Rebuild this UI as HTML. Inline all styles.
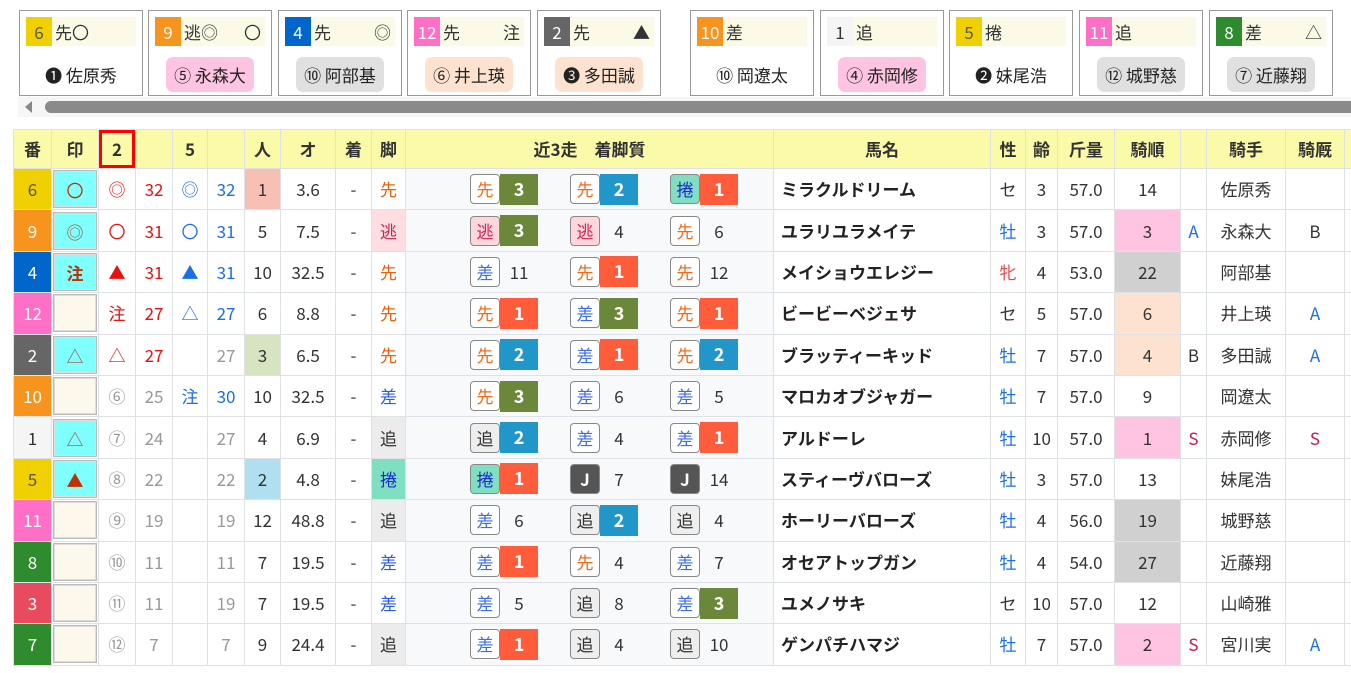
<!DOCTYPE html>
<html><head><meta charset="utf-8">
<style>
*{box-sizing:border-box;margin:0;padding:0}
body{width:1351px;height:673px;overflow:hidden;background:#fff;font-family:"Noto Sans CJK JP","Liberation Sans",sans-serif;color:#333;position:relative}
.card{position:absolute;top:10px;width:124px;height:86px;border:1px solid #999;background:#fff}
.card .top{position:absolute;left:6px;top:6px;right:6px;height:29px;background:#fafae6;font-size:17px;line-height:29px}
.card .top .nb{display:inline-block;width:26px;height:29px;text-align:center;vertical-align:top;margin-right:3px}
.card .top .mk{position:absolute;right:4px;top:0}
.card .nm{position:absolute;left:0;right:0;top:46px;text-align:center}
.card .nm span{display:inline-block;height:35px;line-height:35px;padding:0 8px;border-radius:7px;font-size:17px;color:#222}
.sb{position:absolute;left:18px;top:97px;width:1333px;height:20px;background:#f6f6f6}
.sb .ar{position:absolute;left:7px;top:4px;width:0;height:0;border-top:6px solid transparent;border-bottom:6px solid transparent;border-right:7px solid #888}
.sb .th{position:absolute;left:27px;top:4px;right:0;height:12px;background:#8a8a8a;border-radius:6px 0 0 6px}
table{position:absolute;left:13px;top:129px;border-collapse:collapse;table-layout:fixed;width:1360px}
td,th{border:1px solid #dee2e6;text-align:center;font-size:17px;line-height:24px;height:41.4px;padding:0;white-space:nowrap;overflow:hidden}
th{background:#fafaa8;font-weight:bold;height:39px;color:#333}
.n{color:#fff}
.m{padding:1px}
.m div{height:38px;line-height:38px;border:1px solid #bbb;box-shadow:inset 0 0 0 1px #ddd}
.cy{background:#80ffff;color:#c03000}
.cr{background:#fdf8ec}
.rd{color:#e81010}.bu{color:#1a6fe6}.gy{color:#999}
.rc{background:#f8f9fa;text-align:left;padding-left:64px}
.g3{display:inline-flex;width:100px;vertical-align:middle;align-items:center}
.b{display:inline-block;width:30px;height:30px;line-height:28px;border:1px solid #888;border-radius:4px;text-align:center;font-size:17px}
.r{display:inline-block;width:38px;height:31px;line-height:31px;text-align:center;color:#fff;font-weight:bold;font-size:18px}
.t{display:inline-block;width:38px;text-align:center;font-size:17px}
.gr{background:#6b873a}.bl{background:#2196c9}.re{background:#ff5c3c}
.s{background:#fff;color:#f06a1a}.e{background:#ffd6dc;color:#c8264f}.d{background:#fff;color:#3d6de0}.o{background:#eee;color:#333}.k{background:#7fdfc0;color:#1a2ad0}.j{background:#555;color:#fff;font-weight:bold}
.hn{text-align:left;padding-left:7px;font-weight:bold;color:#222}
.ks{color:#e8600c}.ke{background:#ffdde0;color:#c8264f}.kd{color:#2a5ce0}.ko{background:#ececec;color:#333}.kk{background:#7fdfc0;color:#1a2ad0}
.pk{background:#ffc4e1}.gyb{background:#d0d0d0}.pe{background:#fde2cf}
.sx{color:#1a6fe6}.sf{color:#e84a4a}
.A{color:#1a6fe6}.S{color:#d0184e}
</style></head><body>

<div class="card" style="left:19px"><div class="top"><span class="nb" style="background:#f0d000;color:#555">6</span>先〇</div><div class="nm"><span>❶ 佐原秀</span></div></div>
<div class="card" style="left:148px"><div class="top"><span class="nb" style="background:#f7941d;color:#fff">9</span>逃◎<span class="mk">〇</span></div><div class="nm"><span style="background:#ffc4e1">⑤ 永森大</span></div></div>
<div class="card" style="left:278px"><div class="top"><span class="nb" style="background:#0066cc;color:#fff">4</span>先<span class="mk">◎</span></div><div class="nm"><span style="background:#e0e0e0">⑩ 阿部基</span></div></div>
<div class="card" style="left:407px"><div class="top"><span class="nb" style="background:#ff6ec7;color:#fff">12</span>先<span class="mk">注</span></div><div class="nm"><span style="background:#fde2cf">⑥ 井上瑛</span></div></div>
<div class="card" style="left:537px"><div class="top"><span class="nb" style="background:#666;color:#fff">2</span>先<span class="mk">▲</span></div><div class="nm"><span style="background:#fde2cf">❸ 多田誠</span></div></div>
<div class="card" style="left:690px"><div class="top"><span class="nb" style="background:#f7941d;color:#fff">10</span>差</div><div class="nm"><span>⑩ 岡遼太</span></div></div>
<div class="card" style="left:820px"><div class="top"><span class="nb" style="background:#f5f5f5;color:#333">1</span>追</div><div class="nm"><span style="background:#ffc4e1">④ 赤岡修</span></div></div>
<div class="card" style="left:949px"><div class="top"><span class="nb" style="background:#f0d000;color:#555">5</span>捲</div><div class="nm"><span>❷ 妹尾浩</span></div></div>
<div class="card" style="left:1079px"><div class="top"><span class="nb" style="background:#ff6ec7;color:#fff">11</span>追</div><div class="nm"><span style="background:#e0e0e0">⑫ 城野慈</span></div></div>
<div class="card" style="left:1209px"><div class="top"><span class="nb" style="background:#2e8b2e;color:#fff">8</span>差<span class="mk">△</span></div><div class="nm"><span style="background:#e0e0e0">⑦ 近藤翔</span></div></div>

<div class="sb"><div class="ar"></div><div class="th"></div></div>

<table>
<colgroup><col style="width:38px"><col style="width:47px"><col style="width:37px"><col style="width:37px"><col style="width:35px"><col style="width:37px"><col style="width:36px"><col style="width:55px"><col style="width:36px"><col style="width:34px"><col style="width:368px"><col style="width:217px"><col style="width:35px"><col style="width:32px"><col style="width:57px"><col style="width:66px"><col style="width:26px"><col style="width:79px"><col style="width:59px"><col style="width:29px"></colgroup>
<tr><th>番</th><th>印</th><th style="box-shadow:inset 0 0 0 3px #f00">2</th><th></th><th>5</th><th></th><th>人</th><th>オ</th><th>着</th><th>脚</th><th>近3走　着脚質</th><th>馬名</th><th>性</th><th>齢</th><th>斤量</th><th>騎順</th><th></th><th>騎手</th><th>騎厩</th><th></th></tr>

<tr><td class="n" style="background:#f0d000;color:#555">6</td><td class="m"><div class="cy">〇</div></td><td class="rd">◎</td><td class="rd">32</td><td class="bu">◎</td><td class="bu">32</td><td style="background:#f8c0b4">1</td><td>3.6</td><td>-</td><td class="ks">先</td>
<td class="rc"><span class="g3"><span class="b s">先</span><span class="r gr">3</span></span><span class="g3"><span class="b s">先</span><span class="r bl">2</span></span><span class="g3"><span class="b k">捲</span><span class="r re">1</span></span></td>
<td class="hn">ミラクルドリーム</td><td>セ</td><td>3</td><td>57.0</td><td>14</td><td></td><td>佐原秀</td><td></td><td></td></tr>

<tr><td class="n" style="background:#f7941d">9</td><td class="m"><div class="cy" style="color:#a05030">◎</div></td><td class="rd">〇</td><td class="rd">31</td><td class="bu">〇</td><td class="bu">31</td><td>5</td><td>7.5</td><td>-</td><td class="ke">逃</td>
<td class="rc"><span class="g3"><span class="b e">逃</span><span class="r gr">3</span></span><span class="g3"><span class="b e">逃</span><span class="t">4</span></span><span class="g3"><span class="b s">先</span><span class="t">6</span></span></td>
<td class="hn">ユラリユラメイテ</td><td class="sx">牡</td><td>3</td><td>57.0</td><td class="pk">3</td><td class="A">A</td><td>永森大</td><td>B</td><td></td></tr>

<tr><td class="n" style="background:#0066cc">4</td><td class="m"><div class="cy" style="font-weight:bold">注</div></td><td class="rd">▲</td><td class="rd">31</td><td class="bu">▲</td><td class="bu">31</td><td>10</td><td>32.5</td><td>-</td><td class="ks">先</td>
<td class="rc"><span class="g3"><span class="b d">差</span><span class="t">11</span></span><span class="g3"><span class="b s">先</span><span class="r re">1</span></span><span class="g3"><span class="b s">先</span><span class="t">12</span></span></td>
<td class="hn">メイショウエレジー</td><td class="sf">牝</td><td>4</td><td>53.0</td><td class="gyb">22</td><td></td><td>阿部基</td><td></td><td></td></tr>

<tr><td class="n" style="background:#ff6ec7">12</td><td class="m"><div class="cr"></div></td><td class="rd">注</td><td class="rd">27</td><td class="bu">△</td><td class="bu">27</td><td>6</td><td>8.8</td><td>-</td><td class="ks">先</td>
<td class="rc"><span class="g3"><span class="b s">先</span><span class="r re">1</span></span><span class="g3"><span class="b d">差</span><span class="r gr">3</span></span><span class="g3"><span class="b s">先</span><span class="r re">1</span></span></td>
<td class="hn">ビービーベジェサ</td><td>セ</td><td>5</td><td>57.0</td><td class="pe">6</td><td></td><td>井上瑛</td><td class="A">A</td><td></td></tr>

<tr><td class="n" style="background:#666">2</td><td class="m"><div class="cy" style="color:#a05030">△</div></td><td class="rd">△</td><td class="rd">27</td><td></td><td class="gy">27</td><td style="background:#d6e4c0">3</td><td>6.5</td><td>-</td><td class="ks">先</td>
<td class="rc"><span class="g3"><span class="b s">先</span><span class="r bl">2</span></span><span class="g3"><span class="b d">差</span><span class="r re">1</span></span><span class="g3"><span class="b s">先</span><span class="r bl">2</span></span></td>
<td class="hn">ブラッティーキッド</td><td class="sx">牡</td><td>7</td><td>57.0</td><td class="pe">4</td><td>B</td><td>多田誠</td><td class="A">A</td><td></td></tr>

<tr><td class="n" style="background:#f7941d">10</td><td class="m"><div class="cr"></div></td><td class="gy">⑥</td><td class="gy">25</td><td class="bu">注</td><td class="bu">30</td><td>10</td><td>32.5</td><td>-</td><td class="kd">差</td>
<td class="rc"><span class="g3"><span class="b s">先</span><span class="r gr">3</span></span><span class="g3"><span class="b d">差</span><span class="t">6</span></span><span class="g3"><span class="b d">差</span><span class="t">5</span></span></td>
<td class="hn">マロカオブジャガー</td><td class="sx">牡</td><td>7</td><td>57.0</td><td>9</td><td></td><td>岡遼太</td><td></td><td></td></tr>

<tr><td class="n" style="background:#f5f5f5;color:#333">1</td><td class="m"><div class="cy" style="color:#a05030">△</div></td><td class="gy">⑦</td><td class="gy">24</td><td></td><td class="gy">27</td><td>4</td><td>6.9</td><td>-</td><td class="ko">追</td>
<td class="rc"><span class="g3"><span class="b o">追</span><span class="r bl">2</span></span><span class="g3"><span class="b d">差</span><span class="t">4</span></span><span class="g3"><span class="b d">差</span><span class="r re">1</span></span></td>
<td class="hn">アルドーレ</td><td class="sx">牡</td><td>10</td><td>57.0</td><td class="pk">1</td><td class="S">S</td><td>赤岡修</td><td class="S">S</td><td></td></tr>

<tr><td class="n" style="background:#f0d000;color:#555">5</td><td class="m"><div class="cy">▲</div></td><td class="gy">⑧</td><td class="gy">22</td><td></td><td class="gy">22</td><td style="background:#b0e0f0">2</td><td>4.8</td><td>-</td><td class="kk">捲</td>
<td class="rc"><span class="g3"><span class="b k">捲</span><span class="r re">1</span></span><span class="g3"><span class="b j">J</span><span class="t">7</span></span><span class="g3"><span class="b j">J</span><span class="t">14</span></span></td>
<td class="hn">スティーヴバローズ</td><td class="sx">牡</td><td>3</td><td>57.0</td><td>13</td><td></td><td>妹尾浩</td><td></td><td></td></tr>

<tr><td class="n" style="background:#ff6ec7">11</td><td class="m"><div class="cr"></div></td><td class="gy">⑨</td><td class="gy">19</td><td></td><td class="gy">19</td><td>12</td><td>48.8</td><td>-</td><td class="ko">追</td>
<td class="rc"><span class="g3"><span class="b d">差</span><span class="t">6</span></span><span class="g3"><span class="b o">追</span><span class="r bl">2</span></span><span class="g3"><span class="b o">追</span><span class="t">4</span></span></td>
<td class="hn">ホーリーバローズ</td><td class="sx">牡</td><td>4</td><td>56.0</td><td class="gyb">19</td><td></td><td>城野慈</td><td></td><td></td></tr>

<tr><td class="n" style="background:#2e8b2e">8</td><td class="m"><div class="cr"></div></td><td class="gy">⑩</td><td class="gy">11</td><td></td><td class="gy">11</td><td>7</td><td>19.5</td><td>-</td><td class="kd">差</td>
<td class="rc"><span class="g3"><span class="b d">差</span><span class="r re">1</span></span><span class="g3"><span class="b s">先</span><span class="t">4</span></span><span class="g3"><span class="b d">差</span><span class="t">7</span></span></td>
<td class="hn">オセアトップガン</td><td class="sx">牡</td><td>4</td><td>54.0</td><td class="gyb">27</td><td></td><td>近藤翔</td><td></td><td></td></tr>

<tr><td class="n" style="background:#e84a5f">3</td><td class="m"><div class="cr"></div></td><td class="gy">⑪</td><td class="gy">11</td><td></td><td class="gy">19</td><td>7</td><td>19.5</td><td>-</td><td class="kd">差</td>
<td class="rc"><span class="g3"><span class="b d">差</span><span class="t">5</span></span><span class="g3"><span class="b o">追</span><span class="t">8</span></span><span class="g3"><span class="b d">差</span><span class="r gr">3</span></span></td>
<td class="hn">ユメノサキ</td><td>セ</td><td>10</td><td>57.0</td><td>12</td><td></td><td>山崎雅</td><td></td><td></td></tr>

<tr><td class="n" style="background:#2e8b2e">7</td><td class="m"><div class="cr"></div></td><td class="gy">⑫</td><td class="gy">7</td><td></td><td class="gy">7</td><td>9</td><td>24.4</td><td>-</td><td class="ko">追</td>
<td class="rc"><span class="g3"><span class="b d">差</span><span class="r re">1</span></span><span class="g3"><span class="b o">追</span><span class="t">4</span></span><span class="g3"><span class="b o">追</span><span class="t">10</span></span></td>
<td class="hn">ゲンパチハマジ</td><td class="sx">牡</td><td>7</td><td>57.0</td><td class="pk">2</td><td class="S">S</td><td>宮川実</td><td class="A">A</td><td></td></tr>
</table>
</body></html>
